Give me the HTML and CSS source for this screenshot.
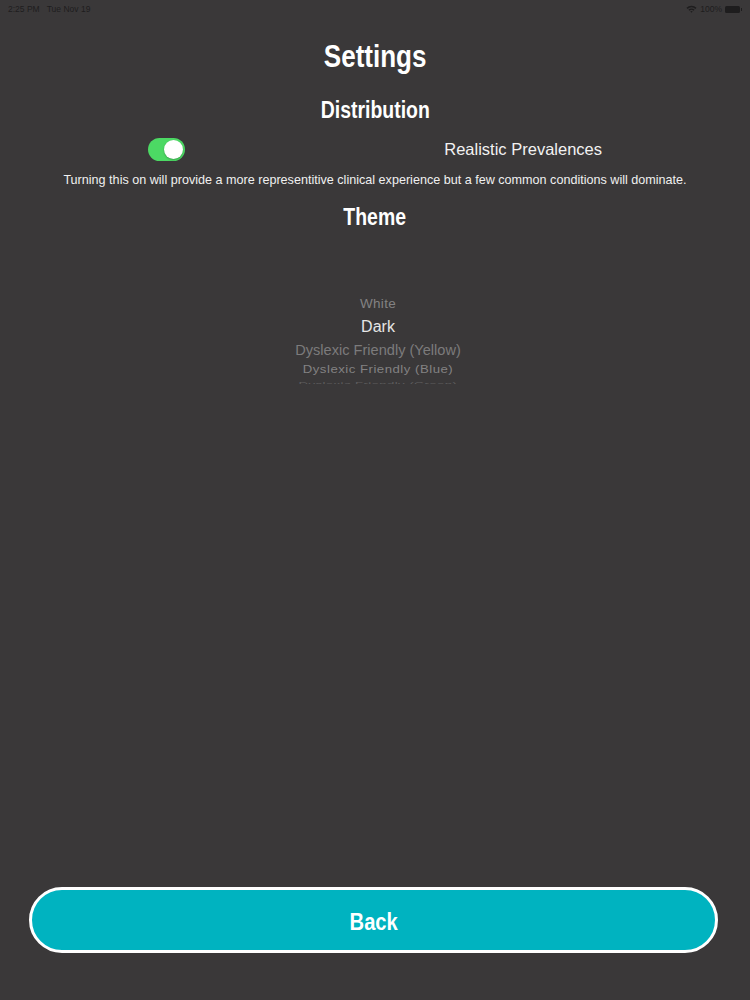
FILE: index.html
```html
<!DOCTYPE html>
<html>
<head>
<meta charset="utf-8">
<link rel="stylesheet" href="styles.css">
</head>
<body>
<div class="screen">
  <div class="status">
    <div class="status-left">2:25 PM&nbsp;&nbsp;&nbsp;Tue Nov 19</div>
    <div class="status-right">
      <svg class="wifi" width="11" height="8" viewBox="0 0 11 8">
        <path d="M0.5 2.8 A7 7 0 0 1 10.5 2.8 L9.4 3.9 A5.5 5.5 0 0 0 1.6 3.9 Z" fill="#1e1d1e"/>
        <path d="M2.4 4.7 A4.3 4.3 0 0 1 8.6 4.7 L7.5 5.8 A2.8 2.8 0 0 0 3.5 5.8 Z" fill="#1e1d1e"/>
        <path d="M4.3 6.6 A1.7 1.7 0 0 1 6.7 6.6 L5.5 7.8 Z" fill="#1e1d1e"/>
      </svg>
      <span>100%</span>
      <span class="battery"></span>
    </div>
  </div>

  <h1 class="title"><span class="narrow">Settings</span></h1>
  <h2 class="section"><span class="narrow">Distribution</span></h2>
  <div class="toggle-row">
    <span class="toggle"><span class="knob"></span></span>
    <span class="toggle-label">Realistic Prevalences</span>
  </div>
  <p class="desc">Turning this on will provide a more representitive clinical experience but a few common conditions will dominate.</p>
  <h2 class="section theme"><span class="narrow">Theme</span></h2>

  <div class="picker">
    <div class="item item-1">White</div>
    <div class="item item-sel">Dark</div>
    <div class="item item-3">Dyslexic Friendly (Yellow)</div>
    <div class="item item-4">Dyslexic Friendly (Blue)</div>
    <div class="item item-5">Dyslexic Friendly (Green)</div>
  </div>

  <div class="spacer"></div>
  <div class="button-wrap">
    <button class="back"><span class="narrow">Back</span></button>
  </div>
</div>
</body>
</html>
```

FILE: styles.css
```css
* { box-sizing: border-box; }
html, body { margin: 0; padding: 0; }
body {
  background: #3a3839;
  font-family: "Liberation Sans", Arial, sans-serif;
  color: #ffffff;
}
.screen {
  width: 750px;
  height: 1000px;
  display: flex;
  flex-direction: column;
}
.status {
  height: 18px;
  display: flex;
  justify-content: space-between;
  align-items: center;
  padding: 0 8px 0 8px;
  font-size: 8.5px;
  color: #1e1d1e;
}
.status-right {
  display: flex;
  align-items: center;
  gap: 3px;
}
.battery {
  display: inline-block;
  width: 15px;
  height: 7px;
  border-radius: 1.5px;
  background: #1e1d1e;
  position: relative;
  margin-right: 2px;
}
.battery::after {
  content: "";
  position: absolute;
  right: -2px;
  top: 2px;
  width: 1.5px;
  height: 3px;
  background: #1e1d1e;
}
.narrow {
  display: inline-block;
  transform: scaleX(0.84);
}
.title {
  margin: 21px 0 0 0;
  text-align: center;
  font-family: "Liberation Sans", Arial, sans-serif;
  font-weight: bold;
  font-size: 31px;
  line-height: 36px;
}
.section {
  margin: 21px 0 0 0;
  text-align: center;
  font-family: "Liberation Sans", Arial, sans-serif;
  font-weight: bold;
  font-size: 24px;
  line-height: 28px;
}
.section .narrow {
  transform: scaleX(0.81);
}
.toggle-row {
  display: flex;
  justify-content: space-between;
  align-items: center;
  padding: 0 148px;
  margin-top: 10px;
  height: 30px;
}
.toggle {
  width: 37px;
  height: 23px;
  border-radius: 12px;
  background: #4cd964;
  position: relative;
}
.knob {
  position: absolute;
  right: 2px;
  top: 2px;
  width: 19px;
  height: 19px;
  border-radius: 50%;
  background: #ffffff;
  box-shadow: 0 1px 2px rgba(0,0,0,0.25);
}
.toggle-label {
  font-size: 16.5px;
  color: #f2f2f2;
}
.desc {
  margin: 8px 0 0 0;
  text-align: center;
  font-size: 12.6px;
  line-height: 16px;
  color: #f0f0f0;
}
.section.theme {
  margin-top: 15px;
}
.picker {
  margin-top: 63px;
  display: flex;
  flex-direction: column;
  align-items: center;
  padding-left: 6px;
  height: 90px;
  overflow: hidden;
}
.item {
  white-space: nowrap;
  text-align: center;
}
.item-1 {
  font-size: 13.5px;
  line-height: 20px;
  letter-spacing: 0.3px;
  color: #838283;
  transform: scaleY(0.92);
}
.item-sel {
  font-size: 16px;
  line-height: 26px;
  color: #e6e6e6;
}
.item-3 {
  font-size: 14.6px;
  line-height: 20px;
  color: #7c7b7c;
  transform: scaleY(0.95);
}
.item-4 {
  font-size: 13.2px;
  line-height: 19px;
  letter-spacing: 0.5px;
  color: #838283;
  transform: scaleY(0.85);
}
.item-5 {
  font-size: 13.2px;
  line-height: 12px;
  letter-spacing: 0.4px;
  color: #5e5d5e;
  transform: scaleY(0.55);
}
.spacer { flex: 1; }
.button-wrap {
  padding: 0 32px 47px 29px;
}
.back {
  display: block;
  width: 100%;
  height: 66px;
  padding-top: 4px;
  border: 3px solid #ffffff;
  border-radius: 33px;
  background: #00b3c0;
  color: #ffffff;
  font-family: "Liberation Sans", Arial, sans-serif;
  font-weight: bold;
  font-size: 24px;
  cursor: pointer;
}
```
